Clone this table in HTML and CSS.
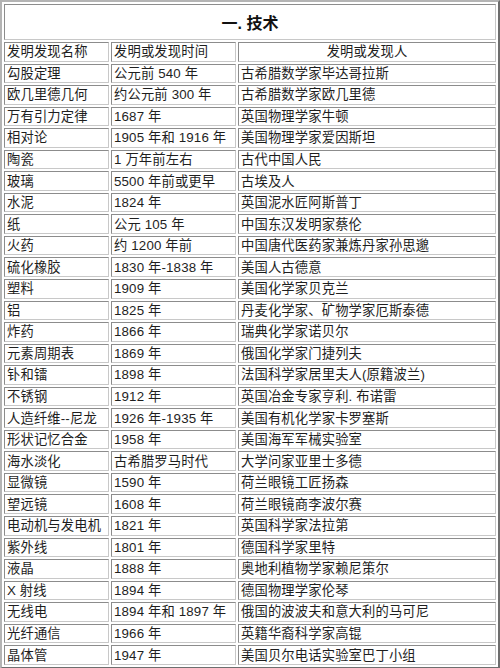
FILE: index.html
```html
<!DOCTYPE html>
<html lang="zh">
<head>
<meta charset="utf-8">
<title>一. 技术</title>
<link rel="stylesheet" href="styles.css">
</head>
<body>
<table class="sheet">
  <colgroup>
    <col class="c-name">
    <col class="c-time">
    <col class="c-person">
  </colgroup>
  <tr class="title-row"><td colspan="3" class="title">一. 技术</td></tr>
  <tr><td>发明发现名称</td><td>发明或发现时间</td><td class="center">发明或发现人</td></tr>
  <tr><td>勾股定理</td><td>公元前 540 年</td><td>古希腊数学家毕达哥拉斯</td></tr>
  <tr><td>欧几里德几何</td><td>约公元前 300 年</td><td>古希腊数学家欧几里德</td></tr>
  <tr><td>万有引力定律</td><td>1687 年</td><td>英国物理学家牛顿</td></tr>
  <tr><td>相对论</td><td>1905 年和 1916 年</td><td>美国物理学家爱因斯坦</td></tr>
  <tr><td>陶瓷</td><td>1 万年前左右</td><td>古代中国人民</td></tr>
  <tr><td>玻璃</td><td>5500 年前或更早</td><td>古埃及人</td></tr>
  <tr><td>水泥</td><td>1824 年</td><td>英国泥水匠阿斯普丁</td></tr>
  <tr><td>纸</td><td>公元 105 年</td><td>中国东汉发明家蔡伦</td></tr>
  <tr><td>火药</td><td>约 1200 年前</td><td>中国唐代医药家兼炼丹家孙思邈</td></tr>
  <tr><td>硫化橡胶</td><td>1830 年-1838 年</td><td>美国人古德意</td></tr>
  <tr><td>塑料</td><td>1909 年</td><td>美国化学家贝克兰</td></tr>
  <tr><td>铝</td><td>1825 年</td><td>丹麦化学家、矿物学家厄斯泰德</td></tr>
  <tr><td>炸药</td><td>1866 年</td><td>瑞典化学家诺贝尔</td></tr>
  <tr><td>元素周期表</td><td>1869 年</td><td>俄国化学家门捷列夫</td></tr>
  <tr><td>钋和镭</td><td>1898 年</td><td>法国科学家居里夫人(原籍波兰)</td></tr>
  <tr><td>不锈钢</td><td>1912 年</td><td>英国冶金专家亨利. 布诺雷</td></tr>
  <tr><td>人造纤维--尼龙</td><td>1926 年-1935 年</td><td>美国有机化学家卡罗塞斯</td></tr>
  <tr><td>形状记忆合金</td><td>1958 年</td><td>美国海军军械实验室</td></tr>
  <tr><td>海水淡化</td><td>古希腊罗马时代</td><td>大学问家亚里士多德</td></tr>
  <tr><td>显微镜</td><td>1590 年</td><td>荷兰眼镜工匠扬森</td></tr>
  <tr><td>望远镜</td><td>1608 年</td><td>荷兰眼镜商李波尔赛</td></tr>
  <tr><td>电动机与发电机</td><td>1821 年</td><td>英国科学家法拉第</td></tr>
  <tr><td>紫外线</td><td>1801 年</td><td>德国科学家里特</td></tr>
  <tr><td>液晶</td><td>1888 年</td><td>奥地利植物学家赖尼策尔</td></tr>
  <tr><td>X 射线</td><td>1894 年</td><td>德国物理学家伦琴</td></tr>
  <tr><td>无线电</td><td>1894 年和 1897 年</td><td>俄国的波波夫和意大利的马可尼</td></tr>
  <tr><td>光纤通信</td><td>1966 年</td><td>英籍华裔科学家高锟</td></tr>
  <tr><td>晶体管</td><td>1947 年</td><td>美国贝尔电话实验室巴丁小组</td></tr>
</table>
</body>
</html>
```

FILE: styles.css
```css
html, body {
  margin: 0;
  padding: 0;
  background: #ffffff;
}

.sheet {
  width: 500px;
  table-layout: fixed;
  border-collapse: separate;
  border-spacing: 2px;
  border: 2px solid;
  border-color: #b4b4b4 #6e6e6e #6e6e6e #b4b4b4;
  background: #ffffff;
  font-family: "Liberation Sans", "Noto Sans CJK SC", sans-serif;
  font-size: 13.3px;
  color: #1e1e1e;
}

.c-name { width: 105px; }
.c-time { width: 125px; }
.c-person { width: 258px; }

.sheet td {
  border: 1px solid;
  border-color: #8c8c8c #c8c8c8 #c8c8c8 #8c8c8c;
  padding: 0 0 0 2px;
  height: 17.55px;
  line-height: 17px;
  white-space: nowrap;
  overflow: hidden;
  vertical-align: middle;
  letter-spacing: 0.15px;
}

.sheet td.center {
  text-align: center;
  padding-left: 0;
}

.sheet td.title {
  height: 32px;
  text-align: center;
  font-size: 16px;
  font-weight: bold;
  color: #111111;
  padding: 2px 0 0 0;
  letter-spacing: 0;
}
```
